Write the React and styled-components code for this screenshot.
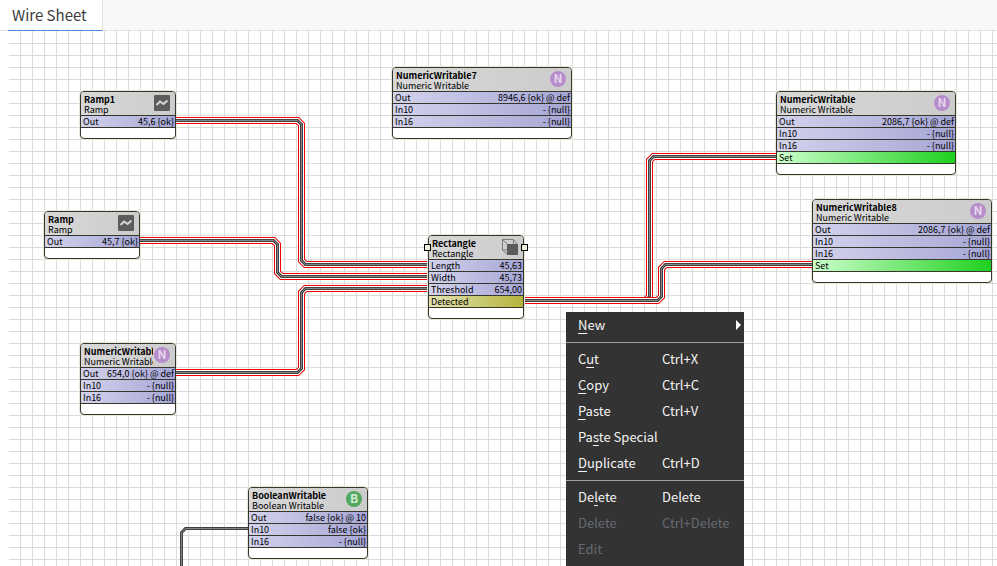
import React from "react";
import styled, { createGlobalStyle } from "styled-components";

const GlobalStyle = createGlobalStyle`
  * { box-sizing: border-box; }
  body {
    margin: 0;
    background: #ffffff;
    color: #000000;
    font-family: "Noto Sans CJK SC", "Noto Sans", sans-serif;
    overflow: hidden;
  }
`;

const Page = styled.main`
  display: flex;
  flex-direction: column;
  min-height: 100vh;
`;

const TabBar = styled.nav`
  display: flex;
  height: 31px;
  padding-left: 8px;
  background: #f8f8f8;
  border-bottom: 1px solid #e4e4e4;
  box-shadow: inset 8px 0 #ffffff;
`;

const Tab = styled.button`
  height: 31px;
  padding: 0 15px 0 4px;
  border: 0;
  border-right: 1px solid #e4e4e4;
  border-bottom: 1px solid #4a86d8;
  background: #ffffff;
  color: #3c3c3c;
  font-family: inherit;
  font-size: 15px;
  line-height: 28px;
`;

const Sheet = styled.section`
  position: relative;
  flex: 1;
  margin-left: 8px;
  overflow: hidden;
  background:
    linear-gradient(#ffffff, #ffffff) 0 0 / 1px 100% no-repeat,
    linear-gradient(to right, #dcdcdc 1px, transparent 1px) 0 0 / 12px 12px,
    linear-gradient(#ffffff, #ffffff) 0 0 / 100% 1px no-repeat,
    linear-gradient(to bottom, #dcdcdc 1px, transparent 1px) 0 0 / 12px 12px,
    #ffffff;
`;

const Wires = styled.svg`
  position: absolute;
  inset: 0;
  width: 100%;
  height: 100%;
  fill: none;
  pointer-events: none;
`;

const Block = styled.article`
  position: absolute;
  left: ${(p) => p.$x * 12}px;
  top: ${(p) => p.$y * 12}px;
  width: ${(p) => p.$cols * 12}px;
  border: 1px solid #36362a;
  border-radius: 4px;
  background: #ffffff;
  box-shadow: 0 0 0 1px #e6e6d8;
  font-size: 9px;
  line-height: 11px;
`;

const BlockHeader = styled.header`
  display: flex;
  align-items: flex-start;
  justify-content: space-between;
  gap: 1px;
  height: 23px;
  padding: 3px 5px 0 3px;
  border-radius: 3px 3px 0 0;
  background: linear-gradient(to right, #d8d8d8, #cccccc);
`;

const Titles = styled.div`
  flex: 1;
  min-width: 0;
  overflow-x: clip;
  white-space: nowrap;
  line-height: 10px;
`;

const BlockName = styled.h2`
  margin: 0;
  font-size: 9px;
  font-weight: 700;
  line-height: 10px;
`;

const fills = {
  value: "linear-gradient(to right, #d2d2ec, #a6a6d6)",
  action: "linear-gradient(to right, #ccffcc, #1fd01f)",
  topic: "linear-gradient(to right, #e4e4b4, #b4b43c)",
};

const Slot = styled.div`
  display: flex;
  justify-content: space-between;
  height: 12px;
  padding: 0 1px 0 2px;
  border-top: 1px solid #36362a;
  background: ${(p) => fills[p.$kind]};
  white-space: nowrap;
`;

const BlockFooter = styled.footer`
  height: 11px;
  border-top: 1px solid #36362a;
`;

const Handle = styled.span`
  position: absolute;
  top: 8px;
  ${(p) => p.$side}: -5px;
  width: 7px;
  height: 7px;
  border: 1px solid #000000;
  background: #efefdc;
`;

const Icon = styled.svg`
  flex: none;
  width: 16px;
  height: 16px;
`;

const Menu = styled.div`
  position: absolute;
  left: 558px;
  top: 281px;
  width: 178px;
  padding-bottom: 8px;
  background: #333333;
  font-size: 13px;
`;

const MenuGroup = styled.div`
  padding: ${(p) => (p.$first ? "0 0 4px" : "3px 0 4px")};
  border-bottom: 1px solid #a0a0a0;
  &:last-child { border-bottom: 0; }
`;

const MenuItem = styled.button`
  display: grid;
  grid-template-columns: 84px 1fr auto;
  align-items: center;
  width: 100%;
  height: 26px;
  padding: 0 3px 0 12px;
  border: 0;
  background: transparent;
  color: #f4f4f4;
  font-family: inherit;
  font-size: 13px;
  line-height: 26px;
  text-align: left;
  white-space: nowrap;
  &:disabled { color: #666a70; }
`;

const Mnemonic = styled.u`
  text-decoration-thickness: 1px;
  text-underline-offset: 3px;
`;

const SubmenuArrow = styled.span`
  border: 5px solid transparent;
  border-left-color: #ffffff;
  border-right-width: 0;
`;

function BlockIcon({ type }) {
  if (type === "ramp")
    return (
      <Icon viewBox="0 0 16 16" aria-hidden="true">
        <rect width="16" height="16" rx="1" fill="#5c5c5c" />
        <path d="M2.5 10L6 6.5L9.5 9L13.5 5.5" fill="none" stroke="#d6d6d6" strokeWidth="2" />
      </Icon>
    );
  if (type === "cube")
    return (
      <Icon viewBox="0 0 16 16" aria-hidden="true">
        <path d="M.5.5H11.5V11H.5ZM.5.5L5.5 5.5M11.5.5L15.5 5.5M.5 11L5.5 15.5M5.5 5.5H15.5V15.5H5.5Z" fill="none" stroke="#7c7c7c" />
        <rect x="5" y="5" width="11" height="11" fill="#5c5c5c" />
      </Icon>
    );
  return (
    <Icon viewBox="0 0 16 16" aria-hidden="true">
      <circle cx="8" cy="8" r="8" fill={type === "B" ? "#52a85f" : "#b68ccb"} />
      <text x="8" y="12" textAnchor="middle" fontSize="12" fontWeight="700" fill={type === "B" ? "#d8ead9" : "#e4d4ec"}>
        {type}
      </text>
    </Icon>
  );
}

const nullSlots = [["In10", "- {null}"], ["In16", "- {null}"]];

const blocks = [
  { x: 6, y: 5, cols: 8, name: "Ramp1", type: "Ramp", icon: "ramp", slots: [["Out", "45,6 {ok}"]] },
  { x: 3, y: 15, cols: 8, name: "Ramp", type: "Ramp", icon: "ramp", slots: [["Out", "45,7 {ok}"]] },
  { x: 32, y: 3, cols: 15, name: "NumericWritable7", type: "Numeric Writable", icon: "N", slots: [["Out", "8946,6 {ok} @ def"], ...nullSlots] },
  { x: 64, y: 5, cols: 15, name: "NumericWritable", type: "Numeric Writable", icon: "N", slots: [["Out", "2086,7 {ok} @ def"], ...nullSlots, ["Set", "", "action"]] },
  { x: 67, y: 14, cols: 15, name: "NumericWritable8", type: "Numeric Writable", icon: "N", slots: [["Out", "2086,7 {ok} @ def"], ...nullSlots, ["Set", "", "action"]] },
  { x: 35, y: 17, cols: 8, name: "Rectangle", type: "Rectangle", icon: "cube", selected: true, slots: [["Length", "45,63"], ["Width", "45,73"], ["Threshold", "654,00"], ["Detected", "", "topic"]] },
  { x: 6, y: 26, cols: 8, name: "NumericWritable", type: "Numeric Writable", icon: "N", slots: [["Out", "654,0 {ok} @ def"], ...nullSlots] },
  { x: 20, y: 38, cols: 10, name: "BooleanWritable", type: "Boolean Writable", icon: "B", slots: [["Out", "false {ok} @ 10"], ["In10", "false {ok}"], ["In16", "- {null}"]] },
];

const wires = [
  { d: "M168 89.5H289.5L293.5 93.5V229.5L297.5 233.5H419", live: true },
  { d: "M132 209.5H265.5L269.5 213.5V241.5L273.5 245.5H419", live: true },
  { d: "M168 341.5H289.5L293.5 337.5V261.5L297.5 257.5H419", live: true },
  { d: "M517 269.5H637.5L641.5 265.5V129.5L645.5 125.5H768", live: true },
  { d: "M517 269.5H649.5L653.5 265.5V237.5L657.5 233.5H804", live: true },
  { d: "M240 497.5H177.5L173.5 501.5V900" },
];

const menu = [
  [{ before: "", key: "N", after: "ew", submenu: true }],
  [
    { before: "C", key: "u", after: "t", shortcut: "Ctrl+X" },
    { before: "", key: "C", after: "opy", shortcut: "Ctrl+C" },
    { before: "", key: "P", after: "aste", shortcut: "Ctrl+V" },
    { before: "Pa", key: "s", after: "te Special" },
    { before: "", key: "D", after: "uplicate", shortcut: "Ctrl+D" },
  ],
  [
    { before: "De", key: "l", after: "ete", shortcut: "Delete" },
    { before: "Delete", shortcut: "Ctrl+Delete", disabled: true },
    { before: "Edit", disabled: true },
  ],
];

function Wire({ d, live }) {
  return (
    <g>
      {live && <path d={d} stroke="#f00000" strokeWidth="7" />}
      {live && <path d={d} stroke="#ffffff" strokeWidth="5" />}
      <path d={d} stroke="#404040" strokeWidth="3" />
      <path d={d} stroke="#858585" strokeWidth="1" />
    </g>
  );
}

function WireBlock({ block }) {
  return (
    <Block $x={block.x} $y={block.y} $cols={block.cols}>
      <BlockHeader>
        <Titles>
          <BlockName>{block.name}</BlockName>
          {block.type}
        </Titles>
        <BlockIcon type={block.icon} />
      </BlockHeader>
      {block.slots.map(([label, value, kind = "value"]) => (
        <Slot key={label} $kind={kind}>
          <span>{label}</span>
          <span>{value}</span>
        </Slot>
      ))}
      <BlockFooter />
      {block.selected && <Handle $side="left" />}
      {block.selected && <Handle $side="right" />}
    </Block>
  );
}

export default function App() {
  return (
    <Page>
      <GlobalStyle />
      <TabBar>
        <Tab type="button">Wire Sheet</Tab>
      </TabBar>
      <Sheet>
        {blocks.map((b) => <WireBlock key={`${b.x}-${b.y}`} block={b} />)}
        <Wires aria-hidden="true">
          {wires.map((w) => <Wire key={w.d} {...w} />)}
        </Wires>
        <Menu role="menu">
          {menu.map((group, i) => (
            <MenuGroup key={i} $first={i === 0}>
              {group.map((item) => (
                <MenuItem key={item.before + item.key} type="button" role="menuitem" disabled={item.disabled}>
                  <span>
                    {item.before}
                    {item.key && <Mnemonic>{item.key}</Mnemonic>}
                    {item.after}
                  </span>
                  <span>{item.shortcut}</span>
                  {item.submenu && <SubmenuArrow />}
                </MenuItem>
              ))}
            </MenuGroup>
          ))}
        </Menu>
      </Sheet>
    </Page>
  );
}
